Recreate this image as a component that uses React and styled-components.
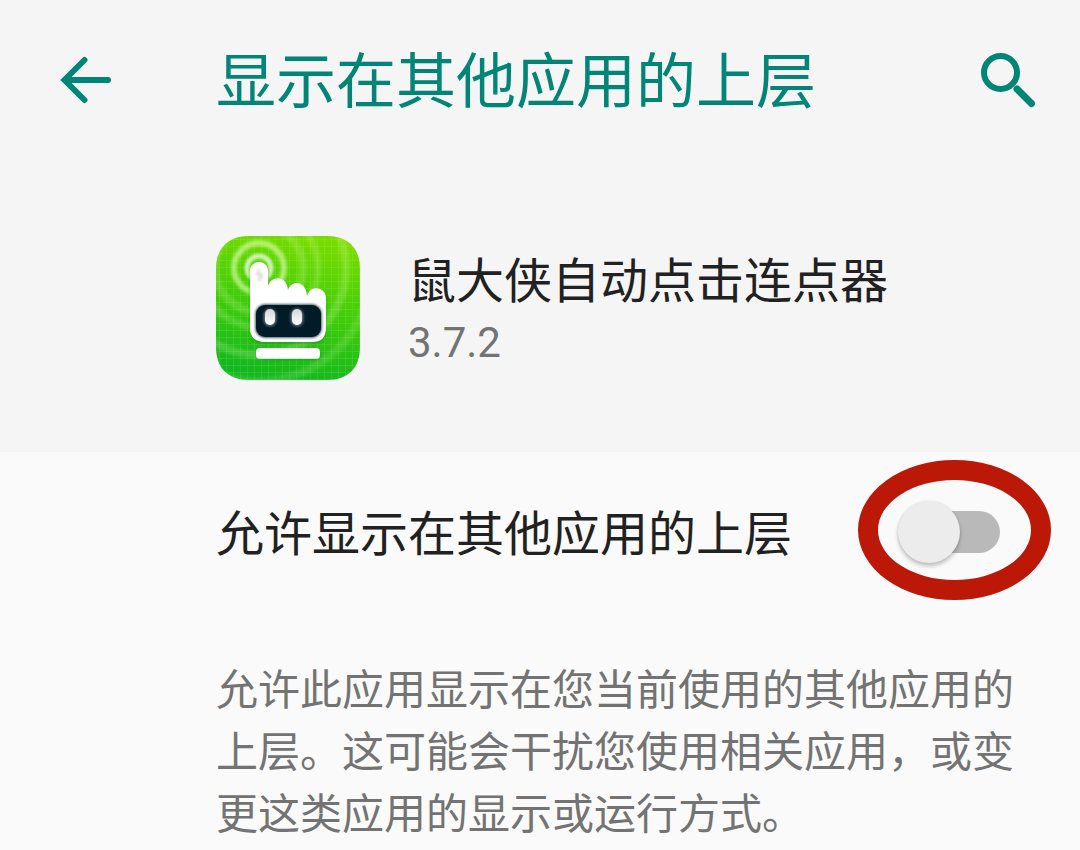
import React, { useState } from "react";
import styled, { createGlobalStyle } from "styled-components";

const GlobalStyle = createGlobalStyle`
  * {
    box-sizing: border-box;
  }
  body {
    margin: 0;
    background: #fafafa;
    font-family: Roboto, "Noto Sans CJK SC", sans-serif;
    font-weight: 400;
    color: #212121;
  }
`;

const Page = styled.div`
  min-height: 100vh;
  background: #fafafa;
`;

const Top = styled.div`
  background: #f5f5f5;
`;

const AppBar = styled.header`
  display: grid;
  grid-template-columns: 216px 1fr auto;
  align-items: center;
  height: 160px;
  padding-right: 36px;
`;

const Title = styled.h1`
  margin: 0;
  padding-top: 6px;
  font-size: 60px;
  font-weight: 400;
  line-height: 80px;
  color: #008577;
  white-space: nowrap;
`;

const IconButton = styled.button`
  display: flex;
  justify-self: start;
  margin-left: ${(p) => p.$inset || 0}px;
  padding: 0;
  border: 0;
  background: none;
  color: #008577;
  cursor: pointer;
`;

const AppInfo = styled.section`
  display: flex;
  gap: 48px;
  padding: 76px 60px 72px 216px;
`;

const AppText = styled.div`
  display: flex;
  flex-direction: column;
  padding-top: 14px;
`;

const AppName = styled.h2`
  margin: 0;
  font-size: 48px;
  font-weight: 400;
  line-height: 64px;
  white-space: nowrap;
`;

const Version = styled.p`
  margin: 0;
  font-size: 42px;
  line-height: 58px;
  color: #737373;
`;

const SettingRow = styled.div`
  display: flex;
  align-items: center;
  justify-content: space-between;
  height: 160px;
  padding: 0 80px 0 216px;
`;

const SettingLabel = styled.label`
  padding-top: 6px;
  font-size: 48px;
  line-height: 64px;
  white-space: nowrap;
`;

const SwitchBox = styled.div`
  position: relative;
  display: flex;
  align-items: center;
`;

const Switch = styled.input`
  appearance: none;
  position: relative;
  width: 92px;
  height: 42px;
  margin: 0;
  border-radius: 21px;
  background: #b9b9b9;
  cursor: pointer;

  &::before {
    content: "";
    position: absolute;
    top: -10px;
    left: -10px;
    width: 62px;
    height: 62px;
    border-radius: 50%;
    background: #ececec;
    box-shadow: 0 3px 4px rgba(0, 0, 0, 0.24), 0 0 2px rgba(0, 0, 0, 0.1);
    transition: left 0.15s;
  }

  &:checked {
    background: #80c2bb;
  }

  &:checked::before {
    left: 40px;
    background: #008577;
  }
`;

const Ring = styled.span`
  position: absolute;
  top: -51px;
  left: -50px;
  width: 193px;
  height: 140px;
  border: 20px solid #bb1807;
  border-radius: 50%;
  pointer-events: none;
`;

const Description = styled.p`
  margin: 0;
  padding: 48px 60px 0 216px;
  font-size: 42px;
  line-height: 62px;
  color: #737373;
`;

function BackIcon() {
  return (
    <svg width="52" height="48" viewBox="0 0 52 48" aria-hidden="true">
      <g fill="none" stroke="currentColor" strokeWidth="6" strokeLinecap="round" strokeLinejoin="miter">
        <path d="M24.500 4L4.500 24L24.500 44" />
        <path d="M6 24H48" />
      </g>
    </svg>
  );
}

function SearchIcon() {
  return (
    <svg width="64" height="64" viewBox="0 0 64 64" aria-hidden="true">
      <g fill="none" stroke="currentColor" strokeWidth="6">
        <circle cx="20.500" cy="24.500" r="16.500" />
        <path d="M37 41L51.500 55.500" strokeWidth="7" strokeLinecap="round" />
      </g>
    </svg>
  );
}

const handPath =
  "M34 35C34 23 52 23 52 35V50C55 39 71 39 72 54C75 44 90 44 91 60C94 48 110 51 110 62V91C110 102 105 106 96 106H49C39 106 34 101 34 92Z";

function AppLogo() {
  return (
    <svg width="144" height="144" viewBox="0 0 144 144" role="img" aria-label="鼠大侠">
      <defs>
        <linearGradient id="leaf" x1="0.6" y1="0" x2="0.4" y2="1">
          <stop offset="0" stopColor="#78dc00" />
          <stop offset="0.5" stopColor="#40cc0b" />
          <stop offset="1" stopColor="#10b622" />
        </linearGradient>
        <linearGradient id="eye" x1="0" y1="0" x2="0" y2="1">
          <stop offset="0" stopColor="#d2d6d8" />
          <stop offset="1" stopColor="#ffffff" />
        </linearGradient>
        <pattern id="mesh" width="7" height="7" patternUnits="userSpaceOnUse">
          <path d="M0 3.500H7M3.500 0V7" stroke="#d8ff8a" strokeWidth="0.6" opacity="0.2" />
        </pattern>
        <clipPath id="tile">
          <path d="M33 0H111C132 0 144 12 144 33V111C144 132 132 144 111 144H33C12 144 0 132 0 111V33C0 12 12 0 33 0Z" />
        </clipPath>
        <filter id="soft" x="-30%" y="-30%" width="160%" height="160%">
          <feGaussianBlur stdDeviation="1.8" />
        </filter>
        <filter id="faint" x="-30%" y="-30%" width="160%" height="160%">
          <feGaussianBlur stdDeviation="0.8" />
        </filter>
      </defs>
      <g clipPath="url(#tile)">
        <rect width="144" height="144" fill="url(#leaf)" />
        <rect width="144" height="144" fill="url(#mesh)" />
        <g fill="none" stroke="#e2ffb4" filter="url(#soft)">
          <circle cx="43" cy="32" r="25" strokeWidth="6" opacity="0.6" />
          <circle cx="43" cy="32" r="44" strokeWidth="8" opacity="0.18" />
          <circle cx="43" cy="32" r="59" strokeWidth="7" opacity="0.18" />
          <circle cx="43" cy="32" r="87" strokeWidth="8" opacity="0.2" />
          <circle cx="43" cy="32" r="113" strokeWidth="8" opacity="0.14" />
        </g>
        <circle cx="43" cy="32" r="12" fill="none" stroke="#d9f5c4" strokeWidth="5" opacity="0.9" filter="url(#faint)" />
        <path d={handPath} fill="#168a16" opacity="0.5" transform="translate(0 2)" filter="url(#soft)" />
        <path d={handPath} fill="#ffffff" />
        <path d="M44 31L39 38L43 41L41 44L44 46L48 39L44 36Z" fill="#e2e2e2" filter="url(#faint)" />
        <rect x="39" y="68" width="67" height="34" rx="10" fill="#52646b" filter="url(#faint)" />
        <rect x="40" y="69" width="65" height="32" rx="9" fill="#021b29" />
        <g fill="#ffffff" opacity="0.5" filter="url(#soft)">
          <rect x="48" y="73" width="12" height="17" rx="6" />
          <rect x="75" y="73" width="12" height="17" rx="6" />
        </g>
        <rect x="49" y="73" width="10" height="16" rx="5" fill="url(#eye)" />
        <rect x="76" y="73" width="10" height="16" rx="5" fill="url(#eye)" />
        <rect x="40" y="113" width="64" height="11" rx="4" fill="#188a1c" opacity="0.5" filter="url(#faint)" />
        <rect x="40" y="112" width="64" height="11" rx="4" fill="#ffffff" />
        <path d="M43 122.500H101" stroke="#c9efcf" strokeWidth="1" />
      </g>
    </svg>
  );
}

export default function App() {
  const [allowed, setAllowed] = useState(false);

  return (
    <Page lang="zh-CN">
      <GlobalStyle />
      <Top>
        <AppBar>
          <IconButton type="button" aria-label="返回" $inset={60}>
            <BackIcon />
          </IconButton>
          <Title>显示在其他应用的上层</Title>
          <IconButton type="button" aria-label="搜索">
            <SearchIcon />
          </IconButton>
        </AppBar>
        <AppInfo>
          <AppLogo />
          <AppText>
            <AppName>鼠大侠自动点击连点器</AppName>
            <Version>3.7.2</Version>
          </AppText>
        </AppInfo>
      </Top>
      <main>
        <SettingRow>
          <SettingLabel htmlFor="overlay">允许显示在其他应用的上层</SettingLabel>
          <SwitchBox>
            <Switch
              id="overlay"
              type="checkbox"
              role="switch"
              checked={allowed}
              onChange={(e) => setAllowed(e.target.checked)}
            />
            <Ring />
          </SwitchBox>
        </SettingRow>
        <Description>
          允许此应用显示在您当前使用的其他应用的上层。这可能会干扰您使用相关应用，或变更这类应用的显示或运行方式。
        </Description>
      </main>
    </Page>
  );
}
